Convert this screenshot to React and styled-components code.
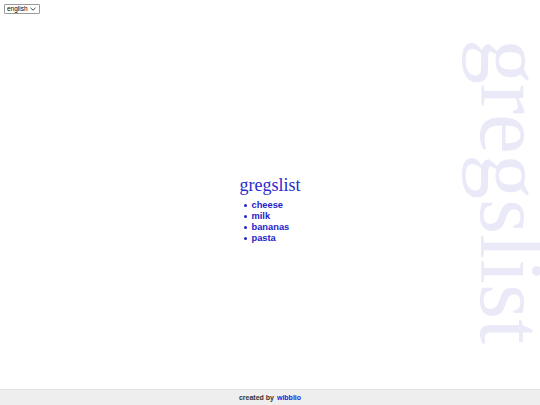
import styled, { createGlobalStyle } from "styled-components";

const Global = createGlobalStyle`
  html, body {
    margin: 0;
    padding: 0;
    background: #fff;
  }
  body {
    font-family: "Liberation Sans", Arial, sans-serif;
  }
`;

const chevron =
  "data:image/svg+xml;utf8,<svg xmlns='http://www.w3.org/2000/svg' width='6' height='4' viewBox='0 0 6 4'><path d='M0.5 0.8 L3 3.2 L5.5 0.8' fill='none' stroke='%23333' stroke-width='0.9'/></svg>";

function App() {
  const items = ["cheese", "milk", "bananas", "pasta"];
  return (
    <Page>
      <Global />
      <LangSelect defaultValue="english">
        <option value="english">english</option>
      </LangSelect>
      <Watermark>gregslist</Watermark>
      <Main>
        <Block>
          <Title>gregslist</Title>
          <List>
            {items.map((item) => (
              <Item key={item}>{item}</Item>
            ))}
          </List>
        </Block>
      </Main>
      <Footer>
        created by <FooterLink href="#">wibblio</FooterLink>
      </Footer>
    </Page>
  );
}

const Page = styled.div`
  position: relative;
  display: flex;
  flex-direction: column;
  height: 405px;
  overflow: hidden;
`;

const LangSelect = styled.select`
  position: absolute;
  top: 4px;
  left: 4px;
  z-index: 1;
  width: 36px;
  height: 10px;
  padding: 0 0 0 2px;
  appearance: none;
  -webkit-appearance: none;
  font-family: "Liberation Sans", Arial, sans-serif;
  font-size: 6.5px;
  line-height: 8px;
  border: 1px solid #9a9a9a;
  border-radius: 1px;
  background: #fff url("${chevron}") no-repeat right 3px center;
  color: #000;
`;

const Watermark = styled.div`
  position: absolute;
  top: 39px;
  right: 4px;
  writing-mode: vertical-rl;
  font-family: "Liberation Serif", "Times New Roman", serif;
  font-size: 90px;
  line-height: 50px;
  color: #e9e9f8;
  pointer-events: none;
  user-select: none;
`;

const Main = styled.main`
  flex: 1;
  display: flex;
  align-items: center;
  justify-content: center;
  padding-top: 30px;
`;

const Block = styled.div`
  display: flex;
  flex-direction: column;
`;

const Title = styled.h1`
  margin: 0 0 5px 0;
  font-family: "Liberation Serif", "Times New Roman", serif;
  font-weight: normal;
  font-size: 18px;
  line-height: 20px;
  color: #2b2bd0;
`;

const List = styled.ul`
  margin: 0;
  padding: 0 0 0 4px;
  list-style: none;
`;

const Item = styled.li`
  display: flex;
  align-items: center;
  font-size: 9.3px;
  line-height: 11px;
  font-weight: bold;
  color: #2222cc;

  &::before {
    content: "";
    width: 3px;
    height: 3px;
    margin-right: 5px;
    border-radius: 50%;
    background: currentColor;
  }
`;

const Footer = styled.footer`
  height: 15px;
  display: flex;
  align-items: center;
  justify-content: center;
  gap: 3px;
  background: #eeeeee;
  border-top: 1px solid #e2e2e2;
  font-size: 7px;
  font-weight: bold;
  color: #333;
`;

const FooterLink = styled.a`
  color: #2222dd;
  text-decoration: none;
`;

export default App;
